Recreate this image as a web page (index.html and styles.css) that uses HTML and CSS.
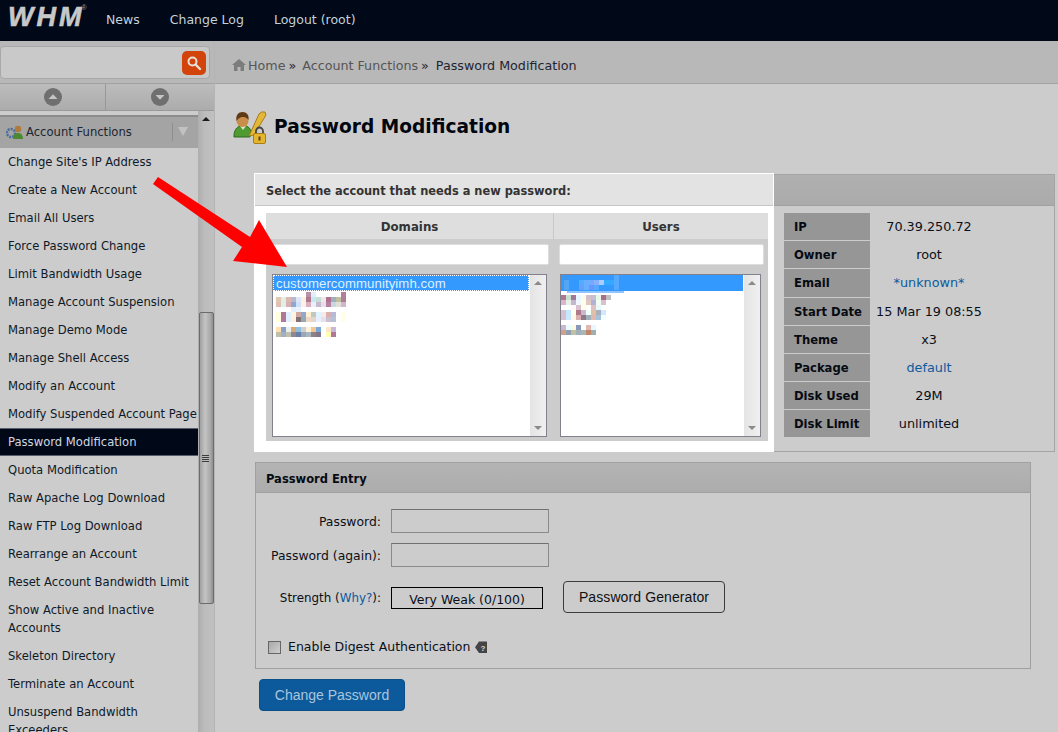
FILE: index.html
```html
<!DOCTYPE html>
<html lang="en">
<head>
<meta charset="utf-8">
<title>Password Modification</title>
<link rel="stylesheet" href="styles.css">
</head>
<body>
<header class="topbar">
  <div class="logo">WHM<sup class="logo-r">®</sup></div>
  <nav class="topnav"><a>News</a><a>Change Log</a><a>Logout (root)</a></nav>
</header>
<div class="layout">
  <aside class="sidebar">
    <div class="search">
      <div class="search-box">
        <button class="search-btn"><svg width="16" height="16" viewBox="0 0 16 16"><circle cx="6.5" cy="6.5" r="4" fill="none" stroke="#e8e0d8" stroke-width="2"/><path d="M9.5 9.5L14 14" stroke="#e8e0d8" stroke-width="2.4" stroke-linecap="round"/></svg></button>
      </div>
    </div>
    <div class="pager">
      <div class="pager-cell pager-first"><svg width="18" height="18" viewBox="0 0 18 18"><circle cx="9" cy="9" r="9" fill="#6f6f6f"/><path d="M4.5 11L9 6.2L13.5 11Z" fill="#c4c4c4"/></svg></div>
      <div class="pager-cell"><svg width="18" height="18" viewBox="0 0 18 18"><circle cx="9" cy="9" r="9" fill="#6f6f6f"/><path d="M4.5 7L9 11.8L13.5 7Z" fill="#c4c4c4"/></svg></div>
    </div>
    <div class="side-scroll">
      <div class="side-list">
        <div class="group">
          <svg class="group-icon" width="18" height="16" viewBox="0 0 18 16"><circle cx="5" cy="9" r="4" fill="none" stroke="#4a6c9c" stroke-width="2.4" stroke-dasharray="2 1"/><circle cx="12" cy="5" r="3.2" fill="#b07a3c"/><path d="M7 15c0-4 2-6 5-6s5 2 5 6z" fill="#4d8a2f"/></svg>
          <span class="group-name">Account Functions</span>
          <span class="group-toggle"></span>
        </div>
        <a class="item">Change Site's IP Address</a>
        <a class="item">Create a New Account</a>
        <a class="item">Email All Users</a>
        <a class="item">Force Password Change</a>
        <a class="item">Limit Bandwidth Usage</a>
        <a class="item">Manage Account Suspension</a>
        <a class="item">Manage Demo Mode</a>
        <a class="item">Manage Shell Access</a>
        <a class="item">Modify an Account</a>
        <a class="item item-single">Modify Suspended Account Page</a>
        <a class="item active">Password Modification</a>
        <a class="item">Quota Modification</a>
        <a class="item">Raw Apache Log Download</a>
        <a class="item">Raw FTP Log Download</a>
        <a class="item">Rearrange an Account</a>
        <a class="item">Reset Account Bandwidth Limit</a>
        <a class="item">Show Active and Inactive Accounts</a>
        <a class="item">Skeleton Directory</a>
        <a class="item">Terminate an Account</a>
        <a class="item item-narrow">Unsuspend Bandwidth Exceeders</a>
      </div>
      <div class="side-track">
        <span class="arrow-up"></span>
        <div class="side-thumb"><span class="grip"></span></div>
      </div>
    </div>
  </aside>
  <main class="main">
    <div class="crumbs">
      <svg class="home" width="14" height="12" viewBox="0 0 14 12"><path d="M7 0L0 6h2v6h3.5V8h3v4H12V6h2z" fill="#7c7c7c"/></svg>
      <a class="crumb">Home</a><span class="sep sep-first">»</span><a class="crumb">Account Functions</a><span class="sep">»</span><span class="crumb-cur">Password Modification</span>
    </div>
    <div class="content">
      <div class="title">
        <svg width="36" height="34" viewBox="0 0 36 34">
          <path d="M1 26c0-6 3-9 6-10h6c3 1 5 3 5 7l-1 4H1z" fill="#4f9a31" stroke="#2f6b1c" stroke-width="1"/>
          <path d="M7 16l3 4 3-4z" fill="#d8e8c8"/>
          <circle cx="9.500" cy="11" r="6" fill="#c98f4a"/>
          <path d="M3.500 11c-1-6 2-9 6-9s7 3 6 8c-2-3-4-3-6-3s-4 1-6 4z" fill="#5e3a16"/>
          <path d="M16 26L26 4q2-3 6-2l1 3-12 20z" fill="#e3b73a" stroke="#a87c18" stroke-width="1"/>
          <path d="M23 24v-3a3.500 3.500 0 0 1 7 0v3" fill="none" stroke="#444" stroke-width="1.800"/>
          <rect x="20.500" y="23.500" width="12" height="10" rx="1.500" fill="#e5b52e" stroke="#a87c18"/>
          <rect x="25.500" y="26.500" width="2" height="4" fill="#5a4210"/>
        </svg>
        <h1 class="title-text">Password Modification</h1>
      </div>

      <section class="select-panel">
        <div class="select-left">
          <div class="select-head">Select the account that needs a new password:</div>
          <div class="select-pad">
            <div class="chooser">
              <div class="chooser-col col-domains">
                <div class="chooser-head">Domains</div>
                <div class="filter-wrap"><input class="filter" type="text"></div>
                <div class="listbox">
                  <div class="listbox-body">
                    <div class="opt opt-focus">customercommunityimh.com</div>
                    <svg class="mosaic" width="72" height="46" viewBox="0 0 72 46">
                      <rect x="30" y="0" fill="#b890a8"/><rect x="35" y="0" fill="#dfeefb"/><rect x="65" y="0" fill="#b07f98"/>
                      <rect x="0" y="5" fill="#e0c8b0"/><rect x="5" y="5" fill="#e0eee8"/><rect x="10" y="5" fill="#dcb8b0"/><rect x="15" y="5" fill="#b9b8d0"/><rect x="20" y="5" fill="#d8e8f8"/><rect x="25" y="5" fill="#fff0e0"/><rect x="30" y="5" fill="#b07890"/><rect x="35" y="5" fill="#c8e8f0"/><rect x="40" y="5" fill="#c8dcd8"/><rect x="45" y="5" fill="#f0e8e8"/><rect x="50" y="5" fill="#b07090"/><rect x="55" y="5" fill="#a0b0b8"/><rect x="60" y="5" fill="#c0c0a0"/><rect x="65" y="5" fill="#b07c98"/>
                      <rect x="0" y="10" fill="#e0c0b0"/><rect x="5" y="10" fill="#e0f0e8"/><rect x="10" y="10" fill="#d8b0b0"/><rect x="15" y="10" fill="#90a8d0"/><rect x="20" y="10" fill="#d0e0f8"/><rect x="25" y="10" fill="#fff0e8"/><rect x="30" y="10" fill="#d8b0c0"/><rect x="35" y="10" fill="#e8f0f8"/><rect x="40" y="10" fill="#c8b8d0"/><rect x="45" y="10" fill="#e8e0e8"/><rect x="50" y="10" fill="#b880a0"/><rect x="55" y="10" fill="#c8d8e0"/><rect x="60" y="10" fill="#e0e0d8"/><rect x="65" y="10" fill="#d0b8c8"/>
                      <rect x="15" y="15" fill="#e8f0ff"/><rect x="20" y="15" fill="#e8f4ff"/>
                      <rect x="0" y="20" fill="#ffffe0"/><rect x="5" y="20" fill="#b07898"/><rect x="10" y="20" fill="#e0f0ff"/><rect x="15" y="20" fill="#fff4e0"/><rect x="20" y="20" fill="#d0a8a0"/><rect x="25" y="20" fill="#90a8d0"/><rect x="30" y="20" fill="#fff0d0"/><rect x="35" y="20" fill="#c0c8c0"/><rect x="40" y="20" fill="#e0f4ff"/><rect x="45" y="20" fill="#f8e8e8"/><rect x="50" y="20" fill="#d8b0b0"/><rect x="55" y="20" fill="#b8b8d8"/><rect x="65" y="20" fill="#ffffe8"/>
                      <rect x="0" y="25" fill="#ffffe0"/><rect x="5" y="25" fill="#b07898"/><rect x="10" y="25" fill="#e0f0ff"/><rect x="15" y="25" fill="#fff0e0"/><rect x="20" y="25" fill="#807078"/><rect x="25" y="25" fill="#98a8b0"/><rect x="30" y="25" fill="#f0d8c8"/><rect x="35" y="25" fill="#e0d8d0"/><rect x="40" y="25" fill="#e8f0ff"/><rect x="45" y="25" fill="#e8e0e8"/><rect x="50" y="25" fill="#c8c0d0"/><rect x="55" y="25" fill="#b8c0d8"/><rect x="65" y="25" fill="#ffffe8"/>
                      <rect x="0" y="35" fill="#ffe0b0"/><rect x="5" y="35" fill="#88a0c8"/><rect x="10" y="35" fill="#e8f0f0"/><rect x="15" y="35" fill="#d8a878"/><rect x="20" y="35" fill="#90c0e0"/><rect x="25" y="35" fill="#d0d0d0"/><rect x="30" y="35" fill="#fff0d8"/><rect x="35" y="35" fill="#f0c890"/><rect x="40" y="35" fill="#78a8d8"/><rect x="50" y="35" fill="#ffe8c8"/><rect x="55" y="35" fill="#c8b8d8"/>
                      <rect x="0" y="40" fill="#c0c0a8"/><rect x="5" y="40" fill="#a0b0c0"/><rect x="10" y="40" fill="#c0c0b0"/><rect x="15" y="40" fill="#908890"/><rect x="20" y="40" fill="#6880a8"/><rect x="25" y="40" fill="#98a8b8"/><rect x="30" y="40" fill="#a8b8c0"/><rect x="35" y="40" fill="#908088"/><rect x="40" y="40" fill="#807888"/><rect x="50" y="40" fill="#ffffb0"/><rect x="55" y="40" fill="#b07898"/>
                    </svg>
                  </div>
                  <div class="listbox-bar"><span class="tri-up"></span><span class="tri-down"></span></div>
                </div>
              </div>
              <div class="chooser-col col-users">
                <div class="chooser-head">Users</div>
                <div class="filter-wrap"><input class="filter" type="text"></div>
                <div class="listbox">
                  <div class="listbox-body">
                    <div class="opt opt-selected">
                      <svg class="mosaic sel-mosaic" width="60" height="18" viewBox="0 0 60 18">
                        <rect x="0" y="0" fill="#3a96f0"/><rect x="50" y="0" fill="#55aaff"/>
                        <rect x="0" y="5" fill="#55a5f5"/><rect x="15" y="5" fill="#55acff"/><rect x="20" y="5" fill="#66b0ff"/><rect x="25" y="5" fill="#77aaff"/><rect x="30" y="5" fill="#88b0ff"/><rect x="35" y="5" fill="#aaccff"/><rect x="40" y="5" fill="#33aaff"/><rect x="45" y="5" fill="#33aaff"/><rect x="50" y="5" fill="#55aaff"/>
                        <rect x="0" y="10" fill="#55a5f5"/><rect x="15" y="10" fill="#66a0ff"/><rect x="20" y="10" fill="#66b0ff"/><rect x="25" y="10" fill="#6699ff"/><rect x="30" y="10" fill="#55aaff"/><rect x="50" y="10" fill="#55aaff"/>
                        <rect class="sel-strip" x="3" y="16" fill="#90c4ff"/>
                      </svg>
                    </div>
                    <svg class="mosaic mosaic-users" width="60" height="40" viewBox="0 0 60 40">
                      <rect x="0" y="0" fill="#b07890"/><rect x="5" y="0" fill="#c8e0d0"/><rect x="10" y="0" fill="#a07898"/><rect x="15" y="0" fill="#e8f8ff"/><rect x="20" y="0" fill="#fff8f0"/><rect x="25" y="0" fill="#d0c0c8"/><rect x="30" y="0" fill="#c8c0d0"/><rect x="35" y="0" fill="#e8f8e8"/><rect x="40" y="0" fill="#a87088"/><rect x="45" y="0" fill="#c0c0c0"/>
                      <rect x="0" y="5" fill="#d8b8c8"/><rect x="5" y="5" fill="#e8f0e8"/><rect x="10" y="5" fill="#c0b8d0"/><rect x="15" y="5" fill="#f0f8ff"/><rect x="20" y="5" fill="#ffffe8"/><rect x="25" y="5" fill="#e0c8c0"/><rect x="30" y="5" fill="#b0b0d8"/><rect x="35" y="5" fill="#f0fff0"/><rect x="40" y="5" fill="#d8c0d0"/>
                      <rect x="10" y="10" fill="#fff8f8"/><rect x="15" y="10" fill="#d8c0d0"/><rect x="20" y="10" fill="#ffffe8"/><rect x="30" y="10" fill="#e0c0c0"/><rect x="35" y="10" fill="#e8f8ff"/>
                      <rect x="0" y="15" fill="#d8c0d0"/><rect x="5" y="15" fill="#c0e8ff"/><rect x="10" y="15" fill="#fffff0"/><rect x="15" y="15" fill="#b07888"/><rect x="20" y="15" fill="#c8b8d0"/><rect x="25" y="15" fill="#f0fff8"/><rect x="30" y="15" fill="#e0c0a8"/><rect x="35" y="15" fill="#a8b0b8"/><rect x="40" y="15" fill="#d0e8ff"/>
                      <rect x="0" y="20" fill="#d8c0d0"/><rect x="5" y="20" fill="#c8e8ff"/><rect x="10" y="20" fill="#fff8e8"/><rect x="15" y="20" fill="#d8b0b0"/><rect x="20" y="20" fill="#907888"/><rect x="25" y="20" fill="#a0b0b8"/><rect x="30" y="20" fill="#e0b8b0"/><rect x="35" y="20" fill="#a8c0d8"/><rect x="40" y="20" fill="#f0ffff"/>
                      <rect x="0" y="30" fill="#c8b8d0"/><rect x="5" y="30" fill="#e8ffff"/><rect x="10" y="30" fill="#fff8e0"/><rect x="15" y="30" fill="#8898b8"/><rect x="25" y="30" fill="#e0b8b0"/><rect x="30" y="30" fill="#e8f8ff"/>
                      <rect x="0" y="35" fill="#d0a088"/><rect x="5" y="35" fill="#90a0b0"/><rect x="10" y="35" fill="#c0c0a8"/><rect x="15" y="35" fill="#a0b0b8"/><rect x="20" y="35" fill="#a8b8b8"/><rect x="25" y="35" fill="#c08868"/><rect x="30" y="35" fill="#a0b0b0"/>
                    </svg>
                  </div>
                  <div class="listbox-bar"><span class="tri-up"></span><span class="tri-down"></span></div>
                </div>
              </div>
            </div>
          </div>
        </div>
        <div class="select-right">
          <div class="select-right-head"></div>
          <dl class="info">
            <div class="info-row"><dt>IP</dt><dd>70.39.250.72</dd></div>
            <div class="info-row"><dt>Owner</dt><dd>root</dd></div>
            <div class="info-row"><dt>Email</dt><dd><a class="link">*unknown*</a></dd></div>
            <div class="info-row"><dt>Start Date</dt><dd>15 Mar 19 08:55</dd></div>
            <div class="info-row"><dt>Theme</dt><dd>x3</dd></div>
            <div class="info-row"><dt>Package</dt><dd><a class="link">default</a></dd></div>
            <div class="info-row"><dt>Disk Used</dt><dd>29M</dd></div>
            <div class="info-row"><dt>Disk Limit</dt><dd>unlimited</dd></div>
          </dl>
        </div>
      </section>

      <section class="entry">
        <div class="entry-head">Password Entry</div>
        <div class="entry-body">
          <div class="field"><label class="field-label">Password:</label><input class="pw" type="password"></div>
          <div class="field field-2"><label class="field-label">Password (again):</label><input class="pw" type="password"></div>
          <div class="field field-3">
            <span class="field-label label-strength">Strength (<a class="link">Why?</a>):</span>
            <div class="strength">Very Weak (0/100)</div>
            <button class="gen">Password Generator</button>
          </div>
          <div class="digest">
            <input class="check" type="checkbox">
            <span>Enable Digest Authentication</span>
            <svg class="tag" width="12" height="12" viewBox="0 0 12 12"><path d="M4 0.500H12V12H4L0 6.200Z" fill="#444"/><text x="5.500" y="9.500" class="tag-q">?</text></svg>
          </div>
        </div>
      </section>
      <button class="submit">Change Password</button>
    </div>
  </main>
</div>
<svg class="red-arrow" width="1058" height="732" viewBox="0 0 1058 732"><path d="M158 177L153 184L242 247L233 261L287 267L259 220L250 237Z" fill="#fe0000"/></svg>
</body>
</html>
```
FILE: styles.css
```css
* { box-sizing: border-box; }
html, body { margin: 0; padding: 0; height: 732px; overflow: hidden; }
body { font: 12.700px/18px "DejaVu Sans", Verdana, sans-serif; color: #0a0f1a; background: #ccc; }

.topbar { height: 41px; background: #010818; display: flex; align-items: center; }
.logo { width: 106px; padding-left: 8px; font: italic bold 27px/28px "Liberation Sans", Arial, sans-serif; letter-spacing: 3px; color: #c8c8c8; -webkit-text-stroke: .6px #c8c8c8; margin-top: -7px; display: flex; }
.logo-r { font: 7px/10px "Liberation Sans", Arial, sans-serif; margin: 0 0 0 -3px; color: #999; -webkit-text-stroke: 0; letter-spacing: 0; }
.topnav { display: flex; gap: 30px; color: #c3d2db; margin-top: -1px; font-size: 12.500px; }

.layout { display: flex; height: 691px; }
.sidebar { width: 215px; flex: none; display: flex; flex-direction: column; background: #ccc; border-right: 1px solid #b4b4b4; }
.search { height: 43px; background: #b8b8b8; border-bottom: 1px solid #a2a2a2; padding: 5px 4px 4px 0; }
.search-box { height: 33px; background: #c9c9c9; border: 1px solid #a8a8a8; border-radius: 4px; display: flex; justify-content: flex-end; align-items: center; padding-right: 3px; }
.search-btn { width: 24px; height: 24px; border: 0; border-radius: 5px; background: #d2440c; padding: 0; display: flex; align-items: center; justify-content: center; }

.pager { height: 27px; display: flex; background: linear-gradient(#bcbcbc, #acacac); border-bottom: 1px solid #9a9a9a; }
.pager-cell { flex: 1; display: flex; align-items: center; justify-content: center; }
.pager-first { width: 105px; flex: none; }
.pager-cell + .pager-cell { border-left: 1px solid #989898; }

.side-scroll { flex: 1; display: flex; min-height: 0; overflow: hidden; }
.side-list { width: 198px; flex: none; padding-top: 4px; }
.group { height: 33px; background: #a4a4a4; border-top: 2px solid #8c8c8c; display: flex; align-items: center; padding: 0 0 2px 6px; color: #1c2530; }
.group-icon { flex: none; margin-right: 2px; }
.group-name { flex: 1; font-size: 11.600px; }
.group-toggle { width: 26px; height: 18px; border-left: 1px solid #8e8e8e; position: relative; }
.group-toggle::after { content: ""; position: absolute; left: 5px; top: 4px; border-left: 5px solid transparent; border-right: 5px solid transparent; border-top: 9px solid #c2c2c2; }
.item { display: block; padding: 5px 0 5px 8px; color: #0f1a28; font-size: 11.600px; }
.item-single { white-space: nowrap; }
.item-narrow { padding-right: 40px; }
.item.active { background: #010818; color: #cfd8e0; border-top: 1px solid #56606a; border-bottom: 1px solid #56606a; padding: 4px 0 4px 8px; }

.side-track { flex: 1; background: linear-gradient(90deg, #aeaeae, #bcbcbc 40%, #c0c0c0); display: flex; flex-direction: column; align-items: center; padding-top: 6px; }
.arrow-up { width: 0; height: 0; border-left: 4px solid transparent; border-right: 4px solid transparent; border-bottom: 4px solid #1a1a1a; margin-bottom: 191px; }
.side-thumb { width: 15px; height: 292px; border: 1px solid #6c6c6c; border-radius: 2px; background: linear-gradient(90deg, #a0a0a0, #c4c4c4 40%, #a8a8a8 80%, #8e8e8e); display: flex; align-items: center; justify-content: center; flex: none; }
.grip { width: 7px; height: 7px; background: repeating-linear-gradient(#3c3c3c 0 1px, #bbb 1px 2px); margin-left: -1px; }

.main { flex: 1; min-width: 0; background: #ccc; }
.crumbs { height: 43px; background: #b8b8b8; border-bottom: 1px solid #a2a2a2; display: flex; align-items: center; padding: 8px 0 0 17px; color: #555; }
.home { flex: none; margin-right: 2px; margin-top: -2px; }
.crumb { color: #555; }
.sep { color: #1f2530; margin: 0 5px 0 3px; }
.sep-first { margin-right: 6px; }
.crumb-cur { color: #1f2530; margin-left: 2px; }

.content { padding: 25px 3px 0 40px; position: relative; }
.title { display: flex; align-items: center; height: 36px; margin-left: -22px; gap: 5px; }
.title-text { margin: 0; font: bold 18.600px/30px "DejaVu Sans", Verdana, sans-serif; color: #02060f; }

.select-panel { display: flex; margin-top: 28px; height: 279px; }
.select-left { width: 520px; margin-left: -1px; flex: none; background: #fff; border: 1px solid #fff; display: flex; flex-direction: column; }
.select-head { height: 32px; background: #e3e3e3; border-bottom: 1px solid #c6c6c6; padding: 8px 11px 0; font-weight: bold; font-size: 11.400px; color: #333; }
.select-pad { padding: 7px 5px 10px 11px; flex: 1; }
.chooser { display: flex; background: #ccc; height: 228px; }
.chooser-col { display: flex; flex-direction: column; }
.col-domains { width: 287px; }
.col-users { flex: 1; min-width: 0; }
.chooser-head { height: 26px; background: #dedede; text-align: center; font-weight: bold; color: #333; line-height: 28px; font-size: 11.800px; border-left: 1px solid #c8c8c8; }
.col-domains .chooser-head { border-left: 0; }
.filter-wrap { height: 35px; padding: 5px 4px 9px 6px; display: flex; }
.filter { width: 100%; height: 21px; border: 1px solid #ddd; border-radius: 2px; background: #fff; padding: 0; }
.col-domains .filter-wrap { padding: 5px 4px 9px 5px; }
.listbox { height: 163px; display: flex; border: 1px solid #82828e; background: #fff; }
.col-domains .listbox { margin: 0 6px; }
.col-users .listbox { margin: 0 7px; }
.listbox-body { flex: 1; min-width: 0; overflow: hidden; }
.opt { height: 16px; font: 13.200px/17px "Liberation Sans", Arial, sans-serif; letter-spacing: .08px; background: #3399ff; color: #dff0ff; }
.opt-focus { padding-left: 3px; outline: 1px dotted #fff; outline-offset: -1px; }
.opt-selected { position: relative; }
.mosaic { display: block; margin: 1px 0 0 3px; }
.mosaic rect { width: 5px; height: 5px; }
.mosaic .sel-strip { width: 57px; height: 2px; }
.mosaic-users { margin: 4px 0 0 0; }
.sel-mosaic { margin: 0 0 0 3px; overflow: visible; }
.listbox-bar { width: 17px; flex: none; background: linear-gradient(90deg, #e4e4e4, #f0f0f0); display: flex; flex-direction: column; justify-content: space-between; align-items: center; padding: 6px 0; border-left: 1px solid #fff; }
.tri-up { border-left: 4px solid transparent; border-right: 4px solid transparent; border-bottom: 4px solid #8a8a8a; }
.tri-down { border-left: 4px solid transparent; border-right: 4px solid transparent; border-top: 4px solid #8a8a8a; }

.select-right { flex: 1; min-width: 0; margin-top: 1px; border: 1px solid #a4a4a4; border-left: 0; display: flex; flex-direction: column; }
.select-right-head { height: 31px; flex: none; background: linear-gradient(#b0b0b0, #ababab); border-bottom: 1px solid #a0a0a0; }
.info { margin: 7px 0 0 10px; display: flex; flex-direction: column; gap: 1px; }
.info-row { display: flex; height: 27px; }
.info-row:nth-child(3) { height: 28px; }
.info dt { width: 86px; background: #969696; font-weight: bold; padding-left: 10px; line-height: 28px; color: #060a12; font-size: 11.600px; }
.info dd { width: 118px; margin: 0; text-align: center; line-height: 27px; font-size: 12.800px; }
.link { color: #0b5a9e; }

.entry { width: 776px; height: 207px; margin-top: 10px; border: 1px solid #a0a0a0; }
.entry-head { height: 30px; background: linear-gradient(#b4b4b4, #acacac); border-bottom: 1px solid #a0a0a0; padding: 7px 10px 0; font-weight: bold; font-size: 11.500px; color: #060a12; }
.entry-body { padding-top: 16px; }
.field { display: flex; align-items: center; height: 24px; }
.field-2 { margin-top: 10px; }
.field-3 { margin-top: 14px; height: 32px; }
.field-label { width: 125px; margin-right: 10px; padding-top: 2px; text-align: right; flex: none; font-size: 12.400px; }
.label-strength { font-size: 11.900px; }
.pw { width: 158px; height: 24px; border: 1px solid #8a8a8a; border-top-color: #707070; background: #ccc; padding: 0; }
.strength { width: 152px; height: 22px; border: 1px solid #000; text-align: center; line-height: 23px; font-size: 12.500px; margin-top: 2px; }
.gen { width: 162px; height: 32px; margin-left: 20px; border: 1px solid #3c3c3c; border-radius: 4px; background: #ccc; color: #111; font: 14px "Liberation Sans", Arial, sans-serif; letter-spacing: .1px; padding: 0; }
.digest { display: flex; align-items: center; margin-top: 22px; padding-left: 12px; font-size: 12.500px; height: 24px; }
.check { appearance: none; width: 13px; height: 13px; margin: 0 7px 0 0; border: 1px solid #666; background: linear-gradient(135deg, #a8a8a8, #cfcfcf); }
.tag { flex: none; margin-left: 5px; }
.tag-q { font: bold 8px "Liberation Sans", Arial, sans-serif; fill: #ddd; }
.submit { display: block; width: 146px; height: 32px; margin: 10px 0 0 4px; border: 1px solid #0a4f8a; border-radius: 4px; background: #0c5a9c; color: #a9c5dc; font: 14px "Liberation Sans", Arial, sans-serif; padding: 0; }

.red-arrow { position: absolute; left: 0; top: 0; pointer-events: none; }
```
